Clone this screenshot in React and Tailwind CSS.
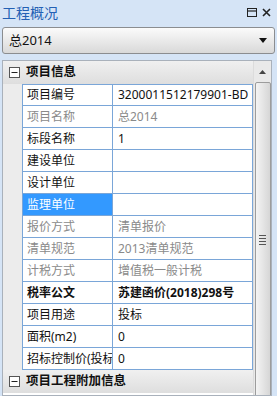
import React from 'react';

const ROWS = [
  { label: '项目编号', value: '3200011512179901-BD' },
  { label: '项目名称', value: '总2014', muted: true },
  { label: '标段名称', value: '1' },
  { label: '建设单位', value: '' },
  { label: '设计单位', value: '' },
  { label: '监理单位', value: '', selected: true },
  { label: '报价方式', value: '清单报价', muted: true },
  { label: '清单规范', value: '2013清单规范', muted: true },
  { label: '计税方式', value: '增值税一般计税', muted: true },
  { label: '税率公文', value: '苏建函价(2018)298号', bold: true },
  { label: '项目用途', value: '投标' },
  { label: '面积(m2)', value: '0' },
  { label: '招标控制价(投标', value: '0' },
];

const MinusBox = () => (
  <svg width="11" height="11" viewBox="0 0 11 11" className="shrink-0">
    <rect x="0.5" y="0.5" width="10" height="10" fill="#fff" stroke="#555" />
    <path d="M2.5 5.5h6" stroke="#222" strokeWidth="1" />
  </svg>
);

const SectionHeader = ({ title }) => (
  <div className="h-[23px] flex items-center gap-[6px] pl-[6px] bg-gradient-to-b from-[#f0f0f0] to-[#dedede] shrink-0">
    <MinusBox />
    <span className="font-bold text-[12.5px] text-[#111]">{title}</span>
  </div>
);

const Row = ({ label, value, muted, selected, bold, first }) => {
  const tone = muted ? 'text-[#8a8a8a]' : 'text-[#111]';
  return (
    <div className="h-[22px] flex shrink-0">
      <div className="w-[19px] bg-[#ececec] shrink-0" />
      <div
        className={`w-[91px] shrink-0 border-l border-r border-b border-[#7aa6d8] ${first ? 'border-t' : ''} flex items-center pl-[4px] whitespace-nowrap overflow-hidden ${
          selected ? 'bg-[#3399ff] text-white' : tone
        } ${bold ? 'font-bold' : ''}`}
      >
        {label}
      </div>
      <div
        className={`flex-1 border-r border-b border-[#7aa6d8] ${first ? 'border-t' : ''} flex items-center pl-[5px] whitespace-nowrap overflow-hidden ${tone} ${
          bold ? 'font-bold' : ''
        }`}
      >
        {value}
      </div>
    </div>
  );
};

export default function App() {
  return (
    <div
      className="w-[277px] h-[396px] bg-[#d5e4f6] overflow-hidden flex flex-col text-[12px]"
      style={{ fontFamily: '"Noto Sans", "Noto Sans CJK SC", sans-serif' }}
    >
      {/* title bar */}
      <div className="h-[24px] flex items-center justify-between pl-[2px] pr-[6px] shrink-0">
        <span className="text-[14px] text-[#2360b4]">工程概况</span>
        <div className="flex items-center gap-[5px]">
          <svg width="10" height="9" viewBox="0 0 10 9">
            <rect x="0.5" y="0.5" width="9" height="8" fill="none" stroke="#222" />
            <path d="M0.5 3h9" stroke="#222" strokeWidth="1.2" />
          </svg>
          <svg width="9" height="9" viewBox="0 0 9 9">
            <path d="M1 1l7 7M8 1l-7 7" stroke="#222" strokeWidth="1.6" />
          </svg>
        </div>
      </div>

      {/* dropdown */}
      <div className="mx-[2px] mt-[3px] h-[27px] rounded-[3px] border border-[#8b8d90] bg-gradient-to-b from-[#fbfbfb] to-[#d9d9d9] flex items-center justify-between pl-[6px] pr-[7px] shrink-0">
        <span className="text-[13px] text-[#111]">总2014</span>
        <svg width="8" height="5" viewBox="0 0 8 5">
          <path d="M0 0h8L4 5z" fill="#111" />
        </svg>
      </div>

      {/* property panel */}
      <div className="ml-[2px] w-[270px] mt-[6px] flex-1 border border-[#a9b1bb] bg-white flex overflow-hidden">
        <div className="w-[250px] flex flex-col shrink-0">
          <SectionHeader title="项目信息" />
          {ROWS.map((r, i) => (
            <Row key={r.label} {...r} first={i === 0} />
          ))}
          <SectionHeader title="项目工程附加信息" />
        </div>

        {/* scrollbar */}
        <div className="w-[18px] bg-[#e9e9e9] flex flex-col items-center shrink-0 border-l border-[#dcdcdc]">
          <div className="h-[21px] flex items-center justify-center shrink-0">
            <svg width="7" height="4" viewBox="0 0 7 4">
              <path d="M0 4h7L3.5 0z" fill="#444" />
            </svg>
          </div>
          <div className="w-[16px] h-[316px] shrink-0 rounded-[2px] border border-[#9c9c9c] bg-gradient-to-r from-[#f4f4f4] to-[#d6d6d6] flex items-center justify-center">
            <div className="flex flex-col gap-[2px]">
              <div className="w-[7px] h-[1px] bg-[#555]" />
              <div className="w-[7px] h-[1px] bg-[#555]" />
              <div className="w-[7px] h-[1px] bg-[#555]" />
              <div className="w-[7px] h-[1px] bg-[#555]" />
            </div>
          </div>
        </div>
      </div>
    </div>
  );
}
